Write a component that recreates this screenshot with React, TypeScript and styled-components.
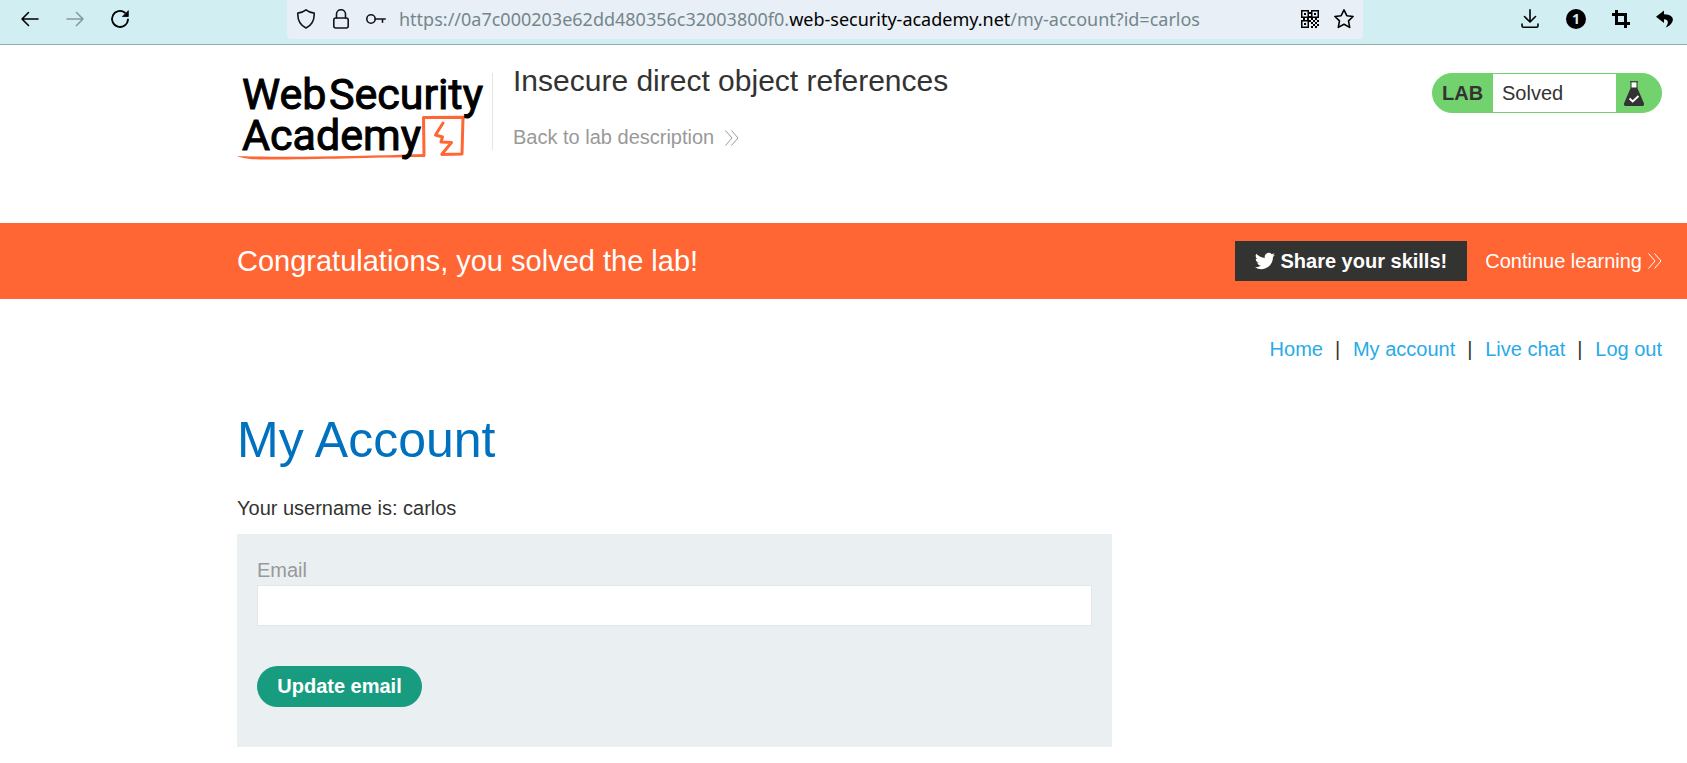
import React from "react";
import styled, { createGlobalStyle } from "styled-components";

const GlobalStyle = createGlobalStyle`
  *, *::before, *::after { box-sizing: border-box; }
  body {
    margin: 0;
    background: #fff;
    color: #333332;
    font-family: "Liberation Sans", Arial, sans-serif;
    font-size: 20px;
    line-height: 23px;
  }
  h1, h2, p { margin: 0; font-weight: 400; }
  a { text-decoration: none; color: inherit; }
  svg { display: block; flex: none; }
`;

const Toolbar = styled.div`
  display: flex;
  align-items: flex-start;
  height: 45px;
  padding: 0 13px 0 20px;
  background: #d1eef2;
  border-bottom: 1px solid #93acae;
`;

const ToolGroup = styled.div<{ $gap: number }>`
  display: flex;
  align-items: center;
  gap: ${(p) => p.$gap}px;
  height: 38px;
`;

const IconButton = styled.button<{ $muted?: boolean }>`
  display: flex;
  padding: 0;
  border: 0;
  background: none;
  color: ${(p) => (p.$muted ? "#879a9e" : "#000")};
`;

const AddressBar = styled.div`
  display: flex;
  align-items: center;
  flex: 1;
  gap: 15px;
  height: 39px;
  margin: 0 157px;
  padding: 0 9px 1px;
  border-radius: 0 0 4px 4px;
  background: #e8eff6;
  color: #15141a;
`;

const Url = styled.div`
  flex: 1;
  margin-left: -2px;
  font-family: "Noto Sans", "Open Sans", sans-serif;
  font-size: 18px;
  line-height: 24px;
  white-space: nowrap;
  color: #74868a;
`;

const Domain = styled.span`
  color: #000;
`;

const Header = styled.header`
  display: flex;
  align-items: flex-start;
  padding: 19px 25px 63px 237px;
`;

const LogoLink = styled.a`
  margin-top: 6px;
`;

const LogoText = styled.text`
  font-family: Roboto, "Liberation Sans", sans-serif;
  font-size: 43px;
  fill: #000;
  stroke: #000;
  stroke-width: 1px;
`;

const Divider = styled.div`
  width: 1px;
  height: 77px;
  margin: 9px 20px 0 5px;
  background: #e4e4e4;
`;

const TitleBlock = styled.div`
  display: flex;
  flex: 1;
  flex-direction: column;
  align-items: flex-start;
  gap: 28px;
`;

const LabTitle = styled.h2`
  font-size: 30px;
  line-height: 34px;
`;

const BackLink = styled.a`
  display: flex;
  align-items: center;
  gap: 11px;
  color: #999;
`;

const LabStatus = styled.div`
  display: flex;
  align-items: stretch;
  width: 230px;
  height: 40px;
  margin-top: 9px;
  border: 1px solid #72d36e;
  border-radius: 20px;
  overflow: hidden;
  background: #72d36e;
  line-height: 38px;
`;

const LabTag = styled.span`
  width: 60px;
  padding-left: 9px;
  font-weight: 700;
`;

const LabState = styled.span`
  flex: 1;
  padding-left: 9px;
  background: #fff;
`;

const LabIcon = styled.span`
  display: flex;
  align-items: center;
  width: 45px;
  padding-left: 8px;
`;

const Banner = styled.section`
  display: flex;
  align-items: center;
  min-height: 76px;
  padding: 18px 25px 18px 237px;
  background: #ff6633;
  color: #fff;
`;

const BannerText = styled.p`
  flex: 1;
  font-size: 29px;
  line-height: 34px;
`;

const ShareButton = styled.button`
  display: flex;
  align-items: center;
  gap: 5px;
  height: 40px;
  margin-right: 18px;
  padding: 0 20px;
  border: 0;
  background: #333332;
  color: #fff;
  font: 700 20px/23px "Liberation Sans", Arial, sans-serif;
`;

const ContinueLink = styled.a`
  display: flex;
  align-items: center;
  gap: 6px;
`;

const Main = styled.main`
  padding: 39px 25px 0 237px;
`;

const Nav = styled.nav`
  display: flex;
  justify-content: flex-end;
  gap: 12px;
`;

const NavLink = styled.a`
  color: #29aae7;
`;

const NavSeparator = styled.span`
  width: 6px;
`;

const PageTitle = styled.h1`
  margin: 51px 0 28px;
  font-size: 50px;
  line-height: 57px;
  color: #0071bf;
`;

const Form = styled.form`
  display: flex;
  flex-direction: column;
  align-items: flex-start;
  max-width: 875px;
  margin-top: 14px;
  padding: 25px 20px 40px;
  background: #eaeff2;
`;

const Label = styled.label`
  margin-bottom: 3px;
  color: #999;
`;

const EmailInput = styled.input`
  width: 100%;
  height: 41px;
  margin-bottom: 40px;
  padding: 0 10px;
  border: 1px solid #e4e6e8;
  border-radius: 0;
  background: #fff;
  font: inherit;
`;

const SubmitButton = styled.button`
  min-width: 165px;
  height: 41px;
  padding: 0 20px;
  border: 0;
  border-radius: 21px;
  background: #179c80;
  color: #fff;
  font: 700 20px/23px "Liberation Sans", Arial, sans-serif;
`;

const stroke = {
  fill: "none",
  stroke: "currentColor",
  strokeWidth: 1.6,
  strokeLinecap: "round" as const,
  strokeLinejoin: "round" as const,
};

const ArrowIcon = ({ right }: { right?: boolean }) => (
  <svg width="20" height="20" viewBox="0 0 20 20" {...stroke}>
    {right ? <path d="M2 10h16M11.500 3.500 18 10l-6.500 6.500" /> : <path d="M18 10H2M8.500 3.500 2 10l6.500 6.500" />}
  </svg>
);

const ReloadIcon = () => (
  <svg width="20" height="20" viewBox="0 0 20 20" {...stroke} strokeWidth={1.8}>
    <path d="M18 10.500a8 8 0 1 1-3-6.800" />
    <path d="M18.300 2v5.500h-5.500z" fill="currentColor" strokeWidth={0.8} />
  </svg>
);

const ShieldIcon = () => (
  <svg width="20" height="20" viewBox="0 0 20 20" {...stroke}>
    <path d="M10 .9c2.300 1.900 5 2.900 8.200 3.200.3 6.800-2.200 11.900-8.200 14.900C4 16 1.500 10.900 1.800 4.100 5 3.800 7.700 2.800 10 .9z" />
  </svg>
);

const LockIcon = () => (
  <svg width="20" height="20" viewBox="0 0 20 20" {...stroke}>
    <rect x="2.800" y="9" width="14.400" height="10" rx="2" />
    <path d="M5.500 9V5.200a4.500 4.500 0 0 1 9 0V9" />
  </svg>
);

const KeyIcon = () => (
  <svg width="20" height="20" viewBox="0 0 20 20" {...stroke}>
    <circle cx="5" cy="10" r="4.200" />
    <path d="M9.200 10h10M16.500 10v3.200" />
  </svg>
);

const QrIcon = () => (
  <svg width="18" height="18" viewBox="0 0 18 18" fill="currentColor">
    <path
      fillRule="evenodd"
      d="M0 0h8v8H0zM1.500 1.500v5h5v-5zM10 0h8v8h-8zM11.500 1.500v5h5v-5zM0 10h8v8H0zM1.500 11.500v5h5v-5zM3 3h2v2H3zM13 3h2v2h-2zM3 13h2v2H3zM8 2h2v2H8zM8 6h2v2H8zM10 8h2v2h-2zM14 8h2v2h-2zM8 10h2v2H8zM12 10h2v2h-2zM16 10h2v2h-2zM10 12h2v2h-2zM14 12h2v2h-2zM12 14h2v2h-2zM16 14h2v2h-2zM10 16h2v2h-2zM14 16h2v2h-2zM2 8h2v2H2zM6 8h2v2H6z"
    />
  </svg>
);

const StarIcon = () => (
  <svg width="20" height="20" viewBox="0 0 20 20" {...stroke}>
    <path d="m10 .9 2.800 5.800 6.300.8-4.600 4.400 1.200 6.500L10 15.300l-5.700 3.100 1.200-6.500L.9 7.500l6.300-.8z" />
  </svg>
);

const DownloadIcon = () => (
  <svg width="20" height="20" viewBox="0 0 20 20" {...stroke}>
    <path d="M10 .8v12M4.500 7.500l5.500 5.500L15.500 7.500M2 15v1.800a1.500 1.500 0 0 0 1.500 1.500h13a1.500 1.500 0 0 0 1.500-1.500V15" />
  </svg>
);

const CountBadge = styled.span`
  width: 20px;
  height: 20px;
  border-radius: 50%;
  background: #000;
  color: #d1eef2;
  font: 700 14px/20px "Noto Sans", sans-serif;
  text-align: center;
`;

const CropIcon = () => (
  <svg width="18" height="18" viewBox="0 0 18 18" fill="none" stroke="currentColor" strokeWidth="3">
    <path d="M0 4.500h13.500V18M4.500 0v13.500H18" />
  </svg>
);

const UndoIcon = () => (
  <svg width="18" height="18" viewBox="0 0 18 18" fill="currentColor">
    <path d="M8 .500 0 6.700 8 13V9.300c3.800 0 5.600 2.700 1.700 8.200C17.500 14.500 21.500 4.600 8 4.200z" />
  </svg>
);

const ChevronsIcon = () => (
  <svg width="14" height="16" viewBox="0 0 14 16" fill="none" stroke="currentColor">
    <path d="M.500.500 7 8 .500 15.500M6.500.500 13 8l-6.500 7.500" />
  </svg>
);

const FlaskIcon = () => (
  <svg width="20" height="25" viewBox="0 0 20 25">
    <path d="M7 1.500h6v6H7z" fill="#fff" />
    <path d="M6 .700h8M7 1v6M13 1v6" stroke="#333332" strokeWidth="1" />
    <path d="M6.800 6.500h6.400L20 22.500c.3 1.400-.4 2.500-1.800 2.500H1.800C.4 25-.3 23.900 0 22.500z" fill="#333332" />
    <path d="m5.500 17.500 3.200 3L14.500 15" fill="none" stroke="#fff" strokeWidth="1.800" />
  </svg>
);

const TwitterIcon = () => (
  <svg width="20" height="20" viewBox="0 0 24 24" fill="currentColor">
    <path d="M23.950 4.570a10 10 0 0 1-2.820.770 4.960 4.960 0 0 0 2.160-2.720c-.950.550-2 .950-3.130 1.180a4.920 4.920 0 0 0-8.380 4.480C7.690 8.090 4.070 6.130 1.640 3.160a4.900 4.900 0 0 0 1.520 6.570 4.900 4.900 0 0 1-2.230-.610v.060a4.920 4.920 0 0 0 3.950 4.830 5 5 0 0 1-2.210.080 4.940 4.940 0 0 0 4.600 3.420A9.870 9.870 0 0 1 0 19.540a14 14 0 0 0 7.550 2.210c9.050 0 14-7.500 14-13.980 0-.210 0-.420-.020-.630a9.940 9.940 0 0 0 2.420-2.570z" />
  </svg>
);

const Logo = () => (
  <svg width="250" height="90" viewBox="0 0 250 90" role="img" aria-label="Web Security Academy">
    <g fill="none" stroke="#ff6633" strokeWidth="3" strokeLinejoin="round" strokeLinecap="round">
      <path d="M187 85 186.500 47.500 226 47.200 225 84 205 84.500" />
      <path d="M206 53 198.500 65 205.500 67 204 72 214.500 72.500 205 84" />
    </g>
    <path d="M0 86c40 1.500 120 .5 188-2v3c-60 .5-100 2.500-160 2.500-14 0-22-1-28-3.500z" fill="#ff6633" />
    <LogoText>
      <tspan x="5" y="39">Web</tspan>
      <tspan x="92">Security</tspan>
      <tspan x="5" y="80">Academy</tspan>
    </LogoText>
  </svg>
);

export default function App() {
  return (
    <>
      <GlobalStyle />
      <Toolbar>
        <ToolGroup $gap={25}>
          <IconButton aria-label="Back"><ArrowIcon /></IconButton>
          <IconButton aria-label="Forward" $muted><ArrowIcon right /></IconButton>
          <IconButton aria-label="Reload"><ReloadIcon /></IconButton>
        </ToolGroup>
        <AddressBar>
          <ShieldIcon />
          <LockIcon />
          <KeyIcon />
          <Url>
            https://0a7c000203e62dd480356c32003800f0.<Domain>web-security-academy.net</Domain>/my-account?id=carlos
          </Url>
          <IconButton aria-label="QR code"><QrIcon /></IconButton>
          <IconButton aria-label="Bookmark"><StarIcon /></IconButton>
        </AddressBar>
        <ToolGroup $gap={26}>
          <IconButton aria-label="Downloads"><DownloadIcon /></IconButton>
          <IconButton aria-label="Notifications"><CountBadge>1</CountBadge></IconButton>
          <IconButton aria-label="Crop"><CropIcon /></IconButton>
          <IconButton aria-label="Undo"><UndoIcon /></IconButton>
        </ToolGroup>
      </Toolbar>

      <Header>
        <LogoLink href="#"><Logo /></LogoLink>
        <Divider />
        <TitleBlock>
          <LabTitle>Insecure direct object references</LabTitle>
          <BackLink href="#">Back to lab description<ChevronsIcon /></BackLink>
        </TitleBlock>
        <LabStatus>
          <LabTag>LAB</LabTag>
          <LabState>Solved</LabState>
          <LabIcon><FlaskIcon /></LabIcon>
        </LabStatus>
      </Header>

      <Banner>
        <BannerText>Congratulations, you solved the lab!</BannerText>
        <ShareButton><TwitterIcon />Share your skills!</ShareButton>
        <ContinueLink href="#">Continue learning<ChevronsIcon /></ContinueLink>
      </Banner>

      <Main>
        <Nav>
          <NavLink href="#">Home</NavLink>
          <NavSeparator>|</NavSeparator>
          <NavLink href="#">My account</NavLink>
          <NavSeparator>|</NavSeparator>
          <NavLink href="#">Live chat</NavLink>
          <NavSeparator>|</NavSeparator>
          <NavLink href="#">Log out</NavLink>
        </Nav>
        <PageTitle>My Account</PageTitle>
        <p>Your username is: carlos</p>
        <Form onSubmit={(e) => e.preventDefault()}>
          <Label htmlFor="email">Email</Label>
          <EmailInput id="email" type="email" />
          <SubmitButton type="submit">Update email</SubmitButton>
        </Form>
      </Main>
    </>
  );
}
